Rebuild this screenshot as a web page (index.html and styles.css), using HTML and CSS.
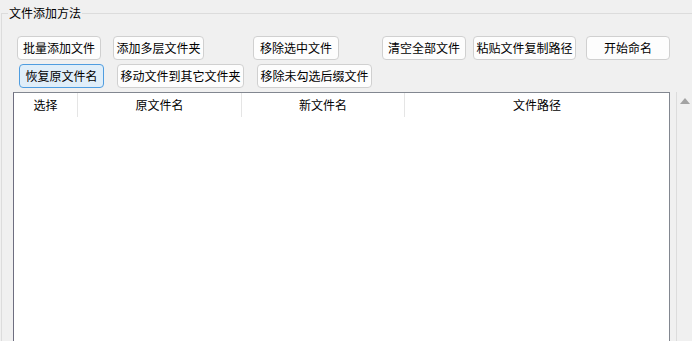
FILE: index.html
```html
<!DOCTYPE html>
<html lang="zh-CN">
<head>
    <meta charset="UTF-8">
    <title>文件添加方法</title>
    <link rel="stylesheet" href="styles.css">
</head>
<body>
    <fieldset class="group">
        <legend class="group-title">文件添加方法</legend>

        <div class="btn-row row-one">
            <button class="btn w84">批量添加文件</button>
            <button class="btn w91 gap12">添加多层文件夹</button>
            <button class="btn w86 gap49">移除选中文件</button>
            <button class="btn w84 gap43">清空全部文件</button>
            <button class="btn w103 gap7">粘贴文件复制路径</button>
            <button class="btn w84 gap10">开始命名</button>
        </div>
        <div class="btn-row row-two">
            <button class="btn btn-active w85">恢复原文件名</button>
            <button class="btn w127 gap13">移动文件到其它文件夹</button>
            <button class="btn w115 gap13">移除未勾选后缀文件</button>
        </div>

        <div class="list-area">
            <div class="file-list">
                <div class="list-head">
                    <div class="col col-check">选择</div>
                    <div class="col col-old">原文件名</div>
                    <div class="col col-new">新文件名</div>
                    <div class="col col-path">文件路径</div>
                </div>
            </div>
            <div class="scroll-track">
                <span class="scroll-up"></span>
            </div>
        </div>
    </fieldset>
</body>
</html>
```

FILE: styles.css
```css
body {
    margin: 0;
    background-color: #f0f0f0;
    font-family: "Noto Sans CJK SC", "Microsoft YaHei", sans-serif;
    font-size: 12px;
    color: #000;
    overflow: hidden;
}
.group {
    margin: 5px 0 0 1px;
    padding: 15px 0 0 11px;
    border: 1px solid #dcdcdc;
    border-right: none;
    border-bottom: none;
    min-width: 0;
}
.group-title {
    margin-left: -5px;
    padding: 0 1px;
    line-height: 16px;
}
.btn-row {
    display: flex;
    margin-left: 4px;
}
.row-two {
    margin-top: 4px;
    margin-left: 6px;
}
.btn {
    box-sizing: border-box;
    height: 24px;
    margin: 0;
    padding: 0;
    font-family: inherit;
    font-size: 12px;
    color: #000;
    background-color: #fdfdfd;
    border: 1px solid #d0d0d0;
    border-radius: 4px;
    line-height: 20px;
}
.btn-active {
    background-color: #e0eef9;
    border-color: #4f9de0;
}
.w84 { width: 84px; }
.w85 { width: 85px; }
.w86 { width: 86px; }
.w91 { width: 91px; }
.w103 { width: 103px; }
.w115 { width: 115px; }
.w127 { width: 127px; }
.gap7 { margin-left: 7px; }
.gap10 { margin-left: 10px; }
.gap12 { margin-left: 12px; }
.gap13 { margin-left: 13px; }
.gap43 { margin-left: 43px; }
.gap49 { margin-left: 49px; }
.list-area {
    display: flex;
    gap: 6px;
    margin-top: 4px;
}
.file-list {
    flex: 1;
    height: 260px;
    background: #fff;
    border: 1px solid #828790;
    border-left-color: #6e6e80;
}
.list-head {
    display: flex;
    height: 24px;
}
.col {
    text-align: center;
    line-height: 24px;
    border-right: 1px solid #e5e5e5;
}
.col-check { width: 63px; }
.col-old { width: 163px; }
.col-new { width: 162px; }
.col-path { flex: 1; border-right: none; }
.scroll-track {
    width: 15px;
    border-left: 1px solid #dcdcdc;
    display: flex;
    justify-content: center;
    padding-top: 6px;
}
.scroll-up {
    width: 0;
    height: 0;
    border-left: 5px solid transparent;
    border-right: 5px solid transparent;
    border-bottom: 6px solid #a3a3a3;
}
```
